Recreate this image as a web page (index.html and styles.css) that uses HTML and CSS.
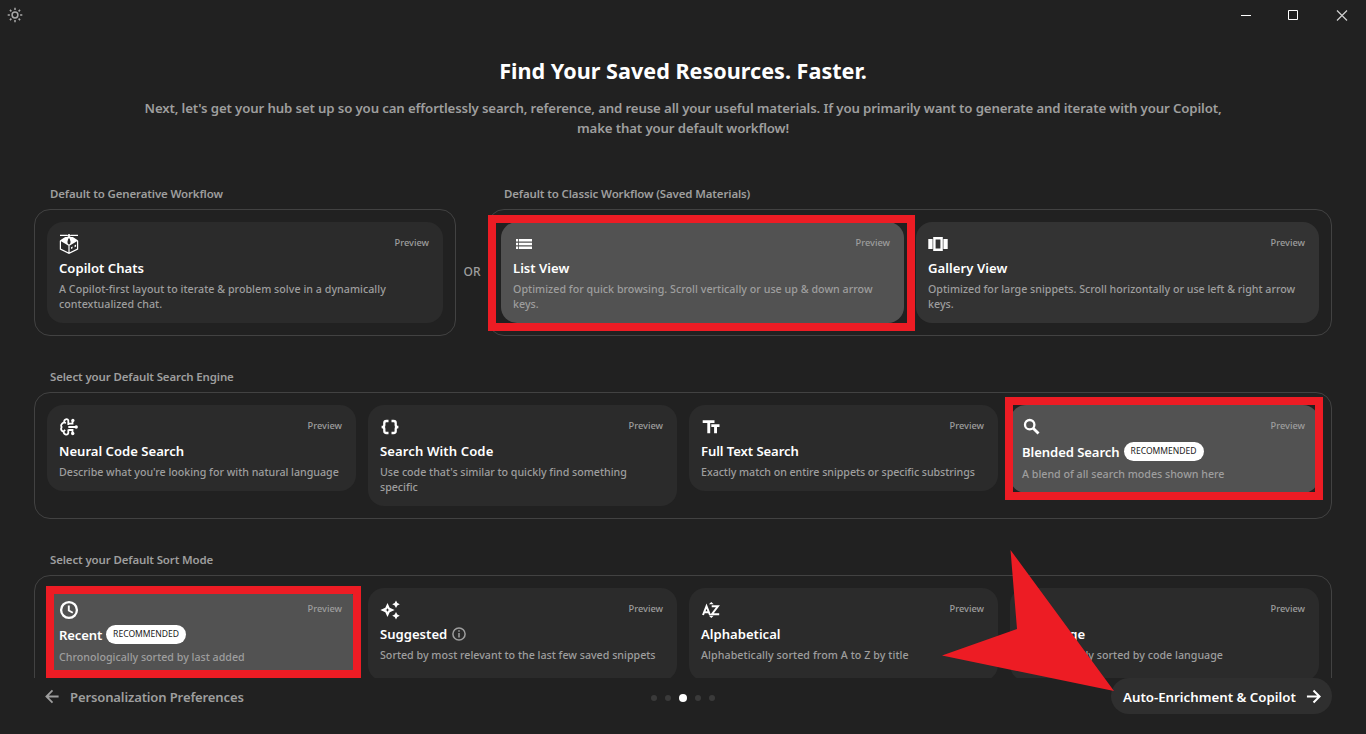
FILE: index.html
```html
<!DOCTYPE html>
<html lang="en">
<head>
<meta charset="utf-8">
<title>Find Your Saved Resources</title>
<link rel="stylesheet" href="styles.css">
</head>
<body>
<div class="window">
  <div class="titlebar">
    <svg class="sun" viewBox="0 0 16 16"><circle cx="8" cy="8" r="2.9"/><path d="M8 .7v2.2M8 13.1v2.2M.7 8h2.2M13.1 8h2.2M2.9 2.9l1.5 1.5M11.6 11.6l1.5 1.5M13.1 2.9l-1.5 1.5M4.4 11.6l-1.5 1.5"/></svg>
    <div class="controls">
      <svg viewBox="0 0 12 12"><path d="M1 6.500h10"/></svg>
      <svg viewBox="0 0 12 12"><path d="M1.500 1.500h9v9h-9z"/></svg>
      <svg class="close" viewBox="0 0 12 12"><path d="M1 1.500l10 10M11 1.500l-10 10"/></svg>
    </div>
  </div>

  <main class="content">
    <h1>Find Your Saved Resources. Faster.</h1>
    <p class="intro">Next, let's get your hub set up so you can effortlessly search, reference, and reuse all your useful materials. If you primarily want to generate and iterate with your Copilot,<br>make that your default workflow!</p>

    <div class="row workflows">
      <section class="generative">
        <h2>Default to Generative Workflow</h2>
        <div class="group">
          <article class="card chats">
            <div class="top">
              <svg class="icon" viewBox="0 0 20 20"><path class="ln thin" d="M1 1.300h7.500M11.500 1.300H19M8.500 1.800h3M1.400 6.800v8.300l8.600 4.200 8.600-4.200V6.800M10 11.500v7.800"/><path fill-rule="evenodd" d="M9.200 0h1.600v3l3 0 5.400 3.600L10 12 .8 6.600 6.200 3h3zM9.300 4.500L8.400 8l.6 2.200h2l.6-2.200-.9-3.500z"/><path d="M12 13.200l1.600-.8v1.900l-1.600.8zM15.600 11.300l1.500-.8v1.900l-1.500.8z"/></svg>
              <span class="preview">Preview</span>
            </div>
            <h3>Copilot Chats</h3>
            <p>A Copilot-first layout to iterate &amp; problem solve in a dynamically<br>contextualized chat.</p>
          </article>
        </div>
      </section>
      <div class="or">OR</div>
      <section class="classic">
        <h2>Default to Classic Workflow (Saved Materials)</h2>
        <div class="group">
          <article class="card list selected">
            <div class="top">
              <svg class="icon" viewBox="0 0 20 20"><path d="M3 5h2.200v2.400H3zM6 5h13v2.400H6zM3 8.800h2.200v2.400H3zM6 8.800h13v2.400H6zM3 12.600h2.200V15H3zM6 12.600h13V15H6z"/></svg>
              <span class="preview">Preview</span>
            </div>
            <h3>List View</h3>
            <p>Optimized for quick browsing. Scroll vertically or use up &amp; down arrow<br>keys.</p>
          </article>
          <article class="card gallery">
            <div class="top">
              <svg class="icon" viewBox="0 0 20 20"><path d="M.3 5h4.300v10H.3zM15.400 5h4.300v10h-4.300zM5.200 3h9.600v14H5.200zM7.600 5.500v9h4.800v-9z" fill-rule="evenodd"/></svg>
              <span class="preview">Preview</span>
            </div>
            <h3>Gallery View</h3>
            <p>Optimized for large snippets. Scroll horizontally or use left &amp; right arrow<br>keys.</p>
          </article>
        </div>
      </section>
    </div>

    <section class="row search">
      <h2>Select your Default Search Engine</h2>
      <div class="group">
        <article class="card neural">
          <div class="top">
            <svg class="icon" viewBox="0 0 20 20"><path class="ln" d="M9.300 4.500V3.400C8.500 1.300 5 2 5.200 5 2.300 6.800 1.400 8.600 2.600 10 1.400 12.500 2.600 14 4.500 14.700 5 18.300 8.800 18.300 9.300 16v-3.500M9.300 4v4M9.300 10h8M9.300 6.700h4.200V3.200M9.300 13h4.200v3.500M5.200 5.200l1.600 1M4.600 14.300l1.600-1.500"/><circle cx="13.900" cy="3.400" r="1.600"/><circle cx="17.200" cy="10" r="1.700"/><circle cx="13.700" cy="16.500" r="1.700"/></svg>
            <span class="preview">Preview</span>
          </div>
          <h3>Neural Code Search</h3>
          <p>Describe what you're looking for with natural language</p>
        </article>
        <article class="card code">
          <div class="top">
            <svg class="icon" viewBox="0 0 20 20"><path class="ln bold" d="M8.500 4H6.400Q4.300 4 4.300 6V8Q4.300 10 1.600 10 4.300 10 4.300 12V14Q4.300 16 6.400 16H8.500M11.500 4H13.600Q15.700 4 15.700 6V8Q15.700 10 18.400 10 15.700 10 15.700 12V14Q15.700 16 13.600 16H11.500"/></svg>
            <span class="preview">Preview</span>
          </div>
          <h3>Search With Code</h3>
          <p>Use code that's similar to quickly find something<br>specific</p>
        </article>
        <article class="card fulltext">
          <div class="top">
            <svg class="icon" viewBox="0 0 20 20"><path d="M1.700 3.300h11.800v2.800H9.200v10.200H6.300V6.100H1.700zM10.300 7.300h8.200v2.800H16v6.200h-2.900v-6.200h-2.800z"/></svg>
            <span class="preview">Preview</span>
          </div>
          <h3>Full Text Search</h3>
          <p>Exactly match on entire snippets or specific substrings</p>
        </article>
        <article class="card blended selected">
          <div class="top">
            <svg class="icon" viewBox="0 0 20 20"><g class="ln bold"><circle cx="7.700" cy="7.700" r="4.700"/><path class="handle" d="M11.200 11.200l5.300 5.300"/></g></svg>
            <span class="preview">Preview</span>
          </div>
          <h3>Blended Search<span class="badge">RECOMMENDED</span></h3>
          <p>A blend of all search modes shown here</p>
        </article>
      </div>
    </section>

    <section class="row sort">
      <h2>Select your Default Sort Mode</h2>
      <div class="group">
        <article class="card recent selected">
          <div class="top">
            <svg class="icon" viewBox="0 0 20 20"><g class="ln bold"><circle cx="10" cy="10" r="7.900"/><path class="hands" d="M9.800 5.500v5l4 2.300"/></g></svg>
            <span class="preview">Preview</span>
          </div>
          <h3>Recent<span class="badge">RECOMMENDED</span></h3>
          <p>Chronologically sorted by last added</p>
        </article>
        <article class="card suggested">
          <div class="top">
            <svg class="icon" viewBox="0 0 20 20"><path fill-rule="evenodd" d="M7.500 3l2.200 4.800 4.900 2.200-4.900 2.200-2.200 4.900-2.200-4.900L.4 10l4.900-2.200zM7.500 8l-.6 1.400-1.400.6 1.400.6.6 1.400.6-1.400 1.400-.6-1.400-.6zM16 .5l1.300 2.500 2.500 1.300-2.500 1.300L16 8.100l-1.300-2.500-2.500-1.300L14.700 3zM16 12l1.300 2.500 2.500 1.300-2.500 1.300L16 19.600l-1.300-2.500-2.500-1.300 2.500-1.300z"/></svg>
            <span class="preview">Preview</span>
          </div>
          <h3>Suggested<svg class="info" viewBox="0 0 14 14"><circle cx="7" cy="7" r="6.100"/><path d="M7 3.300v1.500M7 6v4.600"/></svg></h3>
          <p>Sorted by most relevant to the last few saved snippets</p>
        </article>
        <article class="card alpha">
          <div class="top">
            <svg class="icon" viewBox="0 0 20 20"><path class="ln az" d="M2 15L5.500 6.200 9 15M3.300 12.300h4.500M10.700 6.300h6.200L10.900 14.200h7.300"/><path d="M7.900 4.200L10.300 1.900l2.400 2.300zM7.900 15.700h4.800L10.300 18z"/></svg>
            <span class="preview">Preview</span>
          </div>
          <h3>Alphabetical</h3>
          <p>Alphabetically sorted from A to Z by title</p>
        </article>
        <article class="card language">
          <div class="top"><span class="icon"></span><span class="preview">Preview</span></div>
          <h3>Language</h3>
          <p>Alphabetically sorted by code language</p>
        </article>
      </div>
    </section>
  </main>

  <footer class="footer">
    <div class="back"><svg viewBox="0 0 16 16"><path d="M14.500 8H1.500M8 1.500L1.500 8 8 14.500"/></svg>Personalization Preferences</div>
    <div class="dots"><i></i><i></i><i class="on"></i><i></i><i></i></div>
    <div class="next"><span>Auto-Enrichment &amp; Copilot</span><svg viewBox="0 0 16 16"><path d="M1 8h13M8 1.500L14.500 8 8 14.500"/></svg></div>
  </footer>

  <div class="mark mark-list"></div>
  <div class="mark mark-blended"></div>
  <div class="mark mark-recent"></div>
  <svg class="pointer" viewBox="0 0 172 142"><path d="M68.500 0L172 141 0 105.500 75 79z"/></svg>
</div>
</body>
</html>
```

FILE: styles.css
```css
* { box-sizing: border-box; }

body {
  margin: 0;
  background: #212121;
  color: #fff;
  font-family: "Noto Sans", "Open Sans", sans-serif;
}

h1, h2, h3, p { margin: 0; }

.window {
  position: relative;
  display: flex;
  flex-direction: column;
  width: 1366px;
  height: 734px;
  overflow: hidden;
}

.titlebar {
  flex: none;
  display: flex;
  justify-content: space-between;
  align-items: center;
  height: 30px;
  padding: 0 18px 0 7px;
}

.sun {
  width: 16px;
  height: 16px;
  fill: none;
  stroke: #a8a8a8;
  stroke-width: 1.5;
}

.controls { display: flex; gap: 35px; }
.controls svg {
  width: 12px;
  height: 12px;
  fill: none;
  stroke: #fff;
  stroke-width: 1;
}
.controls .close { margin-left: 2px; stroke: #d0d0d0; stroke-width: 1.2; }

.content {
  flex: 1;
  min-height: 0;
  overflow: hidden;
  padding: 26px 34px 0;
}

h1 {
  font-size: 21.6px;
  font-weight: 700;
  line-height: 30px;
  text-align: center;
}

.intro {
  margin-top: 12px;
  color: #9e9e9e;
  font-size: 13.24px;
  font-weight: 600;
  letter-spacing: -.138px;
  line-height: 20px;
  text-align: center;
  white-space: nowrap;
}

.row { height: 150px; margin-top: 33px; }
.workflows { display: flex; margin-top: 47px; }
.generative { width: 422px; }
.classic { width: 844px; }
.or {
  width: 32px;
  padding-top: 79px;
  color: #9e9e9e;
  font-size: 12px;
  font-weight: 500;
  line-height: 16px;
  text-align: center;
}

h2 {
  height: 24px;
  padding-left: 16px;
  color: #9e9e9e;
  font-size: 11.48px;
  font-weight: 600;
  letter-spacing: -.13px;
  line-height: 18px;
}

.group {
  display: flex;
  align-items: flex-start;
  gap: 12px;
  height: 127px;
  padding: 12px;
  border: 1px solid #424242;
  border-radius: 16px;
}

.card {
  flex: 1 1 0;
  min-width: 0;
  padding: 12px 12px 11px;
  border-radius: 16px;
  background: #2b2b2b;
}
.card.gallery { background: #333; }
.card.selected { background: #525252; }
.sort .card { min-height: 93px; }

.top {
  display: flex;
  justify-content: space-between;
  height: 20px;
}

.icon { width: 20px; height: 20px; fill: #fff; }
.ln {
  fill: none;
  stroke: #fff;
  stroke-width: 1.8;
}
.ln.thin { stroke-width: 1.2; }
.ln.az { stroke-width: 2; }
.ln.bold { stroke-width: 2.3; }
.handle { stroke-width: 2.8; }
.hands { stroke-width: 1.9; }

.preview {
  margin-right: 2px;
  color: #9e9e9e;
  font-size: 9.26px;
  font-weight: 500;
  line-height: 18px;
}

h3 {
  display: flex;
  align-items: center;
  height: 28px;
  font-size: 13.1px;
  font-weight: 600;
  white-space: nowrap;
}
.blended h3, .recent h3 { height: 30px; }

.card p {
  color: #9e9e9e;
  font-size: 10.68px;
  font-weight: 500;
  line-height: 15px;
  white-space: nowrap;
}

.gallery h3 { letter-spacing: .06px; }
.code h3 { letter-spacing: .1px; }
.fulltext h3, .blended h3 { letter-spacing: -.08px; }
.recent h3 { letter-spacing: -.15px; }
.chats p, .list p { letter-spacing: .028px; }
.neural p, .code p { letter-spacing: -.018px; }
.fulltext p { letter-spacing: -.053px; }
.alpha p { letter-spacing: .07px; }
.language p { letter-spacing: .02px; }

.badge {
  width: 80px;
  height: 19px;
  margin: 0 0 2px 4px;
  border-radius: 10px;
  background: #fff;
  color: #212121;
  font-size: 8.56px;
  font-weight: 400;
  letter-spacing: 0;
  line-height: 19px;
  text-align: center;
}

.info {
  width: 14px;
  height: 14px;
  margin-left: 5px;
  fill: none;
  stroke: #9e9e9e;
  stroke-width: 1.5;
}

.footer {
  flex: none;
  display: flex;
  justify-content: space-between;
  height: 56px;
  padding: 0 34px;
}

.back {
  display: flex;
  align-items: center;
  gap: 10px;
  width: 460px;
  height: 38px;
  padding-left: 11px;
  color: #9e9e9e;
  font-size: 13.07px;
  font-weight: 600;
  letter-spacing: -.14px;
}
.back svg, .next svg {
  width: 15px;
  height: 15px;
  fill: none;
  stroke: #9e9e9e;
  stroke-width: 1.9;
}
.back svg { margin-bottom: 2px; }

.dots {
  display: flex;
  align-items: center;
  gap: 8px;
  height: 40px;
}
.dots i {
  width: 6px;
  height: 6px;
  border-radius: 50%;
  background: #3a3a3a;
}
.dots .on { width: 8px; height: 8px; background: #fff; }

.next {
  display: flex;
  align-items: center;
  gap: 10px;
  height: 36px;
  width: 221px;
  margin-left: 239px;
  padding-left: 12px;
  border-radius: 18px;
  background: #2f2f2f;
  font-size: 13.28px;
  font-weight: 600;
  white-space: nowrap;
}
.next span { padding-top: 2px; }
.next svg { stroke: #fff; stroke-width: 2.2; }

/* Annotation overlays */
.mark { position: absolute; border: 8px solid #ed1c24; }
.mark-list { left: 488px; top: 215px; width: 427px; height: 116px; }
.mark-blended { left: 1005px; top: 397px; width: 318px; height: 103px; }
.mark-recent { left: 46px; top: 586px; width: 315px; height: 92px; }
.pointer {
  position: absolute;
  left: 942px;
  top: 550px;
  width: 172px;
  height: 142px;
  fill: #ed1c24;
}
```
